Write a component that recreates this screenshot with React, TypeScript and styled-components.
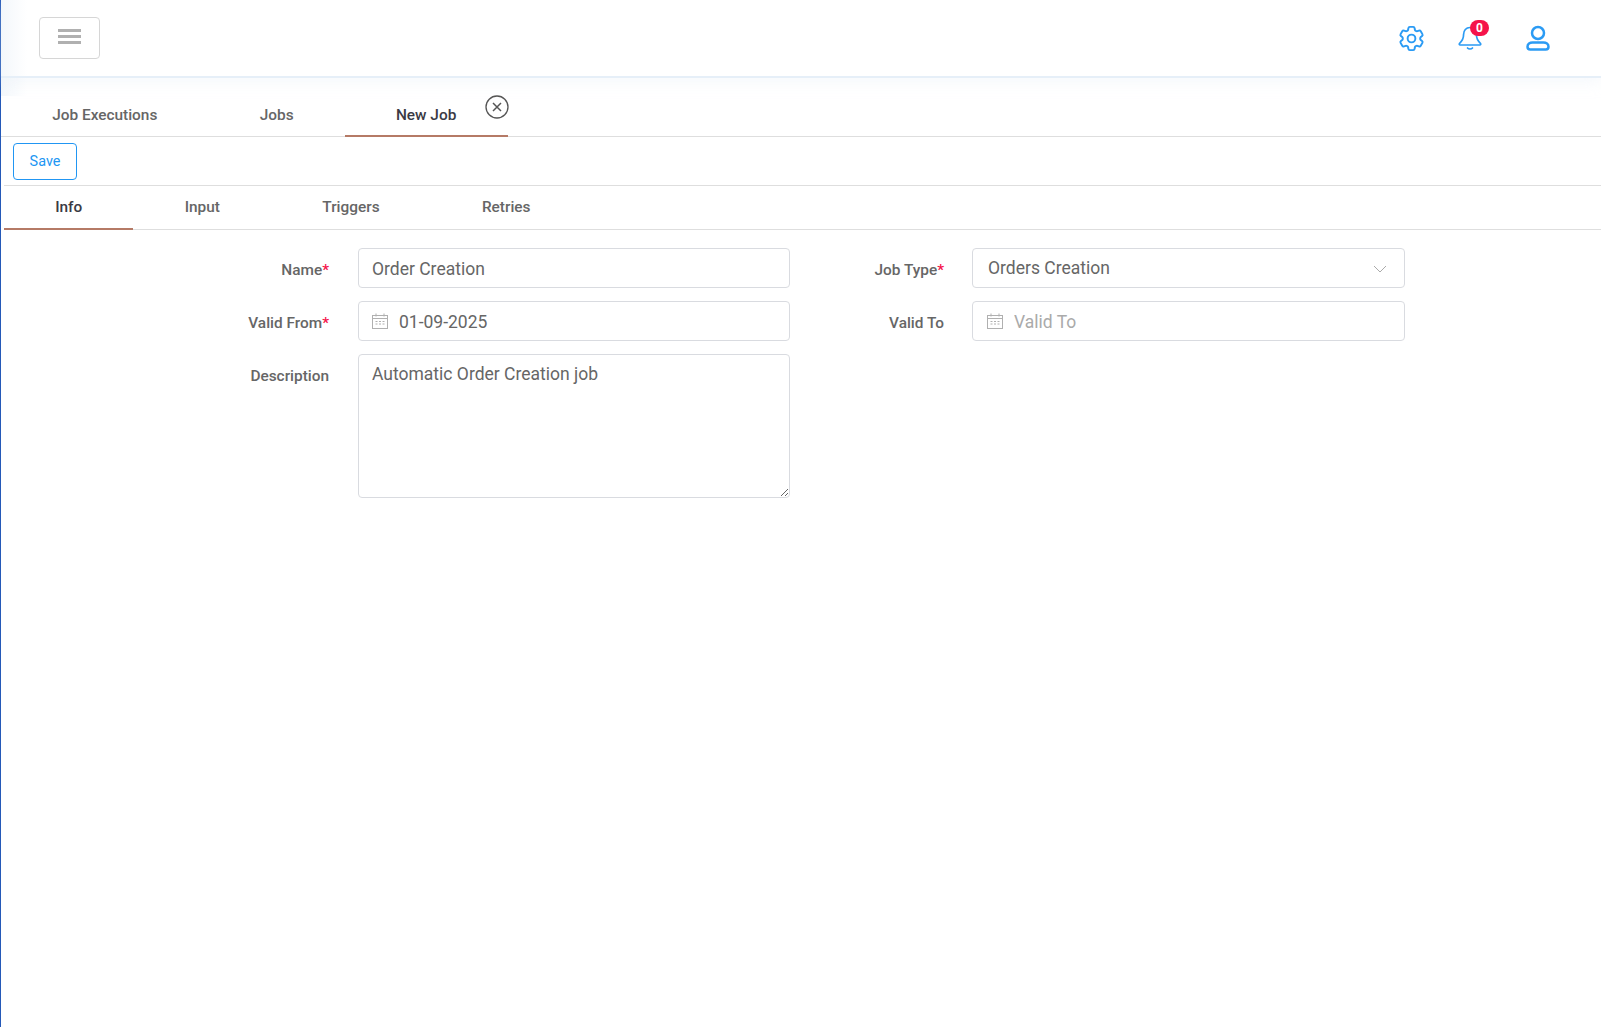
import styled, { createGlobalStyle } from 'styled-components';
import { HiOutlineCog6Tooth } from 'react-icons/hi2';

const GlobalStyle = createGlobalStyle`
    html, body {
        margin: 0;
        padding: 0;
        background: #fff;
        font-family: Roboto, "Liberation Sans", sans-serif;
    }
    * {
        box-sizing: border-box;
    }
`;

const Page = styled.div`
    min-height: 1027px;
    border-left: 1px solid #2459b8;
    background: linear-gradient(90deg, #f3f7fb 0, #fff 26px) no-repeat 0 0 / 100% 96px, #fff;
`;

const Header = styled.header`
    height: 78px;
    display: flex;
    align-items: center;
    justify-content: space-between;
    padding: 0 0 0 38px;
    border-bottom: 2px solid #e6eff8;
    box-shadow: 0 4px 14px rgba(226, 236, 246, 0.35);
`;

const MenuButton = styled.button`
    width: 61px;
    height: 42px;
    display: flex;
    align-items: center;
    justify-content: center;
    background: #fff;
    border: 1px solid #d6d6d6;
    border-radius: 4px;
    padding: 0 0 3px;
`;

const HeaderIcons = styled.div`
    display: flex;
    align-items: center;
    padding-right: 50px;
`;

const HeaderIcon = styled.div<{ $gap: number }>`
    position: relative;
    display: flex;
    margin-left: ${({ $gap }) => $gap}px;
    color: #2b9bf4;
`;

const Badge = styled.span`
    position: absolute;
    top: -5px;
    left: 13px;
    width: 19px;
    height: 16px;
    border-radius: 8px;
    background: #f5134a;
    color: #fff;
    font-size: 12px;
    font-weight: 700;
    line-height: 16px;
    text-align: center;
`;

const TabBar = styled.nav<{ $inset: number; $height: number }>`
    display: flex;
    height: ${({ $height }) => $height}px;
    margin-left: ${({ $inset }) => $inset}px;
    border-bottom: 1px solid #dedede;
`;

const Tab = styled.div<{ $active?: boolean; $lift: number }>`
    position: relative;
    display: flex;
    justify-content: center;
    align-items: flex-end;
    padding: 0 51.2px ${({ $lift }) => $lift}px;
    margin-bottom: -1px;
    color: ${({ $active }) => ($active ? '#3a3a44' : '#666')};
    font-size: 15.4px;
    font-weight: 500;
    border-bottom: 2px solid ${({ $active }) => ($active ? '#b57a66' : 'transparent')};
`;

const TabClose = styled.span`
    position: absolute;
    top: 17px;
    right: -1px;
    display: flex;
    color: #555;
`;

const ActionBar = styled.div`
    height: 49px;
    padding: 6px 0 0 12px;
    margin-left: 3px;
    border-bottom: 1px solid #dedede;
`;

const SaveButton = styled.button`
    width: 64px;
    height: 37px;
    margin-left: -3px;
    background: #fff;
    border: 1px solid #2196f3;
    border-radius: 4px;
    color: #2196f3;
    font-family: inherit;
    font-size: 14.4px;
`;

const Form = styled.form`
    display: flex;
    gap: 13px;
    padding: 18px 0 0 188px;
`;

const FieldColumn = styled.div<{ $labelWidth: number; $labelGap: number; $inputWidth: number }>`
    display: grid;
    grid-template-columns: ${({ $labelWidth }) => $labelWidth}px ${({ $inputWidth }) => $inputWidth}px;
    column-gap: ${({ $labelGap }) => $labelGap}px;
    row-gap: 13px;
    align-content: start;
`;

const Label = styled.label`
    padding-top: 13px;
    text-align: right;
    color: #666;
    font-size: 15.4px;
    font-weight: 500;
`;

const Required = styled.span`
    color: #f5134a;
`;

const InputBox = styled.div<{ $inset: number }>`
    height: 40px;
    display: flex;
    align-items: center;
    gap: 11px;
    padding: 0 13px 0 ${({ $inset }) => $inset}px;
    background: #fff;
    border: 1px solid #d9dbe0;
    border-radius: 4px;
    color: #666;
    font-size: 17.5px;
`;

const TextInput = styled.input`
    flex: 1;
    min-width: 0;
    border: 0;
    outline: 0;
    padding: 2px 0 0;
    background: transparent;
    color: #666;
    font-family: inherit;
    font-size: 17.5px;

    &::placeholder {
        color: #aaa;
        opacity: 1;
    }
`;

const SelectValue = styled.span`
    flex: 1;
    padding-left: 1px;
`;

const SelectChevron = styled.span`
    display: flex;
    margin: 2px 4px 0 0;
`;

const TextArea = styled.textarea`
    display: block;
    width: 432px;
    height: 144px;
    padding: 9px 13px;
    border: 1px solid #d9dbe0;
    border-radius: 4px;
    outline: 0;
    color: #666;
    font-family: inherit;
    font-size: 17.5px;
    line-height: 21px;
`;

const CalendarIcon = () => (
    <svg width="16" height="16" viewBox="0 0 16 16" fill="none" stroke="#b0b0b0" strokeWidth="1">
        <rect x="0.5" y="2.5" width="15" height="13" />
        <path d="M0.5 5.500h15M4 0.500v3M12 0.500v3" />
        <path d="M3.500 8.500h2M7 8.500h2M10.500 8.500h2M3.500 11h2M7 11h2M10.500 11h2" />
    </svg>
);

const ChevronIcon = () => (
    <svg width="14" height="8" viewBox="0 0 14 8" fill="none" stroke="#aaa" strokeWidth="1">
        <path d="M1 1l6 6 6-6" />
    </svg>
);

const MenuIcon = () => (
    <svg width="23" height="15" viewBox="0 0 23 15" fill="#b0b0b0">
        <rect width="23" height="3" />
        <rect y="6" width="23" height="3" />
        <rect y="12" width="23" height="3" />
    </svg>
);

const BellIcon = () => (
    <svg width="26" height="26" viewBox="0 0 26 26" fill="none" stroke="currentColor" strokeWidth="1.700" strokeLinejoin="round" strokeLinecap="round">
        <path d="M13 2.500c-4 0-6.400 3-6.400 6.800 0 5-1.400 6.700-4 9 -.7.700-.3 1.700.6 1.700h19.600c.9 0 1.300-1 .6-1.700 -2.600-2.300-4-4-4-9 0-3.800-2.400-6.800-6.400-6.800z" />
        <path d="M10.500 23c1.200 1.300 3.800 1.300 5 0" />
    </svg>
);

const UserIcon = () => (
    <svg width="26" height="26" viewBox="0 0 26 26" fill="none" stroke="currentColor" strokeWidth="2.500">
        <circle cx="13" cy="8" r="6" />
        <path d="M2.500 21.800c0-2.800 2.500-4.300 5-4.300h11c2.500 0 5 1.500 5 4.300 0 1.800-1 2.700-2.700 2.700h-15.600c-1.700 0-2.700-.9-2.700-2.700z" strokeLinejoin="round" />
    </svg>
);

const CloseIcon = () => (
    <svg width="24" height="24" viewBox="0 0 24 24" fill="none" stroke="currentColor" strokeWidth="1.300">
        <circle cx="12" cy="12" r="11" />
        <path d="M8 8l8 8M16 8l-8 8" strokeWidth="1.500" />
    </svg>
);

export default function App() {
    return (
        <Page>
            <GlobalStyle />
            <Header>
                <MenuButton type="button">
                    <MenuIcon />
                </MenuButton>
                <HeaderIcons>
                    <HeaderIcon $gap={0}>
                        <HiOutlineCog6Tooth size={31} />
                    </HeaderIcon>
                    <HeaderIcon $gap={30}>
                        <BellIcon />
                        <Badge>0</Badge>
                    </HeaderIcon>
                    <HeaderIcon $gap={42}>
                        <UserIcon />
                    </HeaderIcon>
                </HeaderIcons>
            </Header>
            <TabBar $inset={0} $height={59}>
                <Tab $lift={11}>Job Executions</Tab>
                <Tab $lift={11}>Jobs</Tab>
                <Tab $lift={11} $active>
                    New Job
                    <TabClose>
                        <CloseIcon />
                    </TabClose>
                </Tab>
            </TabBar>
            <ActionBar>
                <SaveButton type="button">Save</SaveButton>
            </ActionBar>
            <TabBar $inset={3} $height={44}>
                <Tab $lift={12} $active>Info</Tab>
                <Tab $lift={12}>Input</Tab>
                <Tab $lift={12}>Triggers</Tab>
                <Tab $lift={12}>Retries</Tab>
            </TabBar>
            <Form>
                <FieldColumn $labelWidth={140} $labelGap={29} $inputWidth={432}>
                    <Label>Name<Required>*</Required></Label>
                    <InputBox $inset={13}>
                        <TextInput defaultValue="Order Creation" />
                    </InputBox>
                    <Label>Valid From<Required>*</Required></Label>
                    <InputBox $inset={13}>
                        <CalendarIcon />
                        <TextInput defaultValue="01-09-2025" />
                    </InputBox>
                    <Label>Description</Label>
                    <TextArea defaultValue="Automatic Order Creation job" />
                </FieldColumn>
                <FieldColumn $labelWidth={141} $labelGap={28} $inputWidth={433}>
                    <Label>Job Type<Required>*</Required></Label>
                    <InputBox $inset={14}>
                        <SelectValue>Orders Creation</SelectValue>
                        <SelectChevron>
                            <ChevronIcon />
                        </SelectChevron>
                    </InputBox>
                    <Label>Valid To</Label>
                    <InputBox $inset={14}>
                        <CalendarIcon />
                        <TextInput placeholder="Valid To" />
                    </InputBox>
                </FieldColumn>
            </Form>
        </Page>
    );
}
